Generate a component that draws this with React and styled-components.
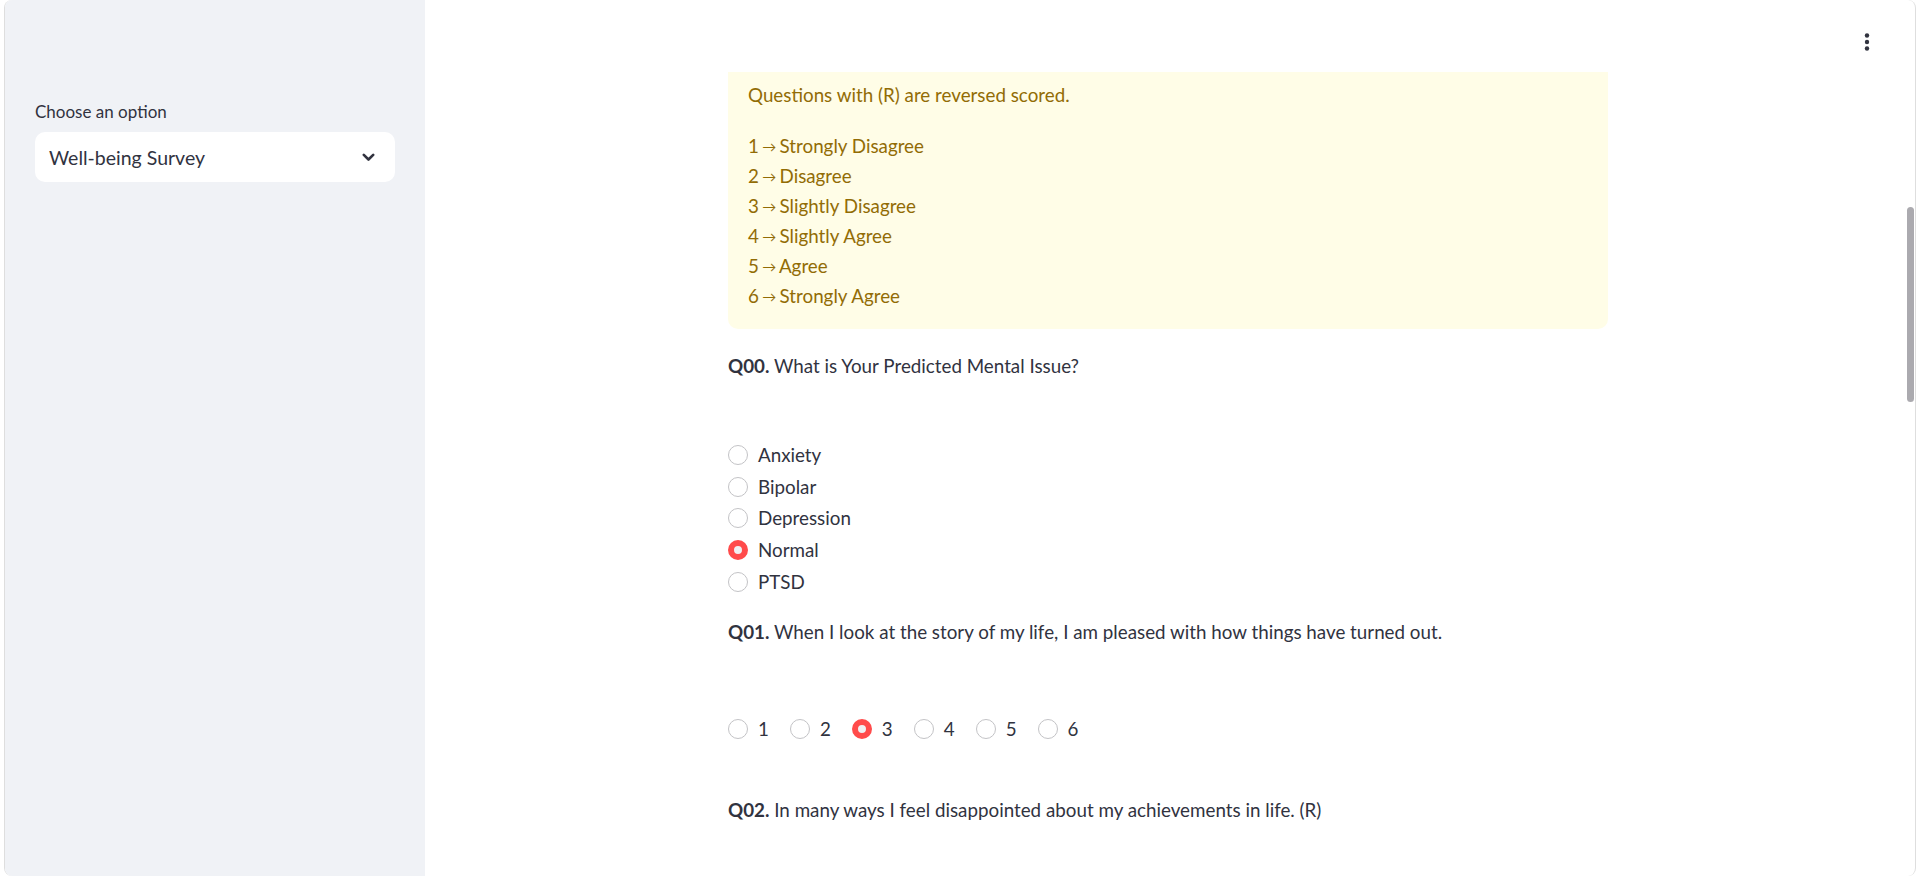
import React from 'react';
import styled, { createGlobalStyle } from 'styled-components';

const GlobalStyle = createGlobalStyle`
  html, body {
    margin: 0;
    padding: 0;
    background: #ffffff;
    overflow: hidden;
  }
  body {
    font-family: Lato, "Open Sans", sans-serif;
    color: #31333f;
  }
  * { box-sizing: border-box; }
`;

const Frame = styled.div`
  position: relative;
  display: flex;
  height: 876px;
  margin: 0 2px 0 4px;
  border-left: 1px solid #dedede;
  border-right: 1px solid #dedede;
  border-radius: 8px;
  overflow: hidden;
`;

const Sidebar = styled.aside`
  width: 420px;
  flex-shrink: 0;
  background: #f0f2f6;
  padding: 101px 30px 0 30px;
`;

const FieldLabel = styled.div`
  font-size: 17px;
  line-height: 22px;
  color: #31333f;
  margin-bottom: 9px;
`;

const Select = styled.div`
  height: 50px;
  background: #ffffff;
  border-radius: 10px;
  display: flex;
  align-items: center;
  justify-content: space-between;
  padding: 0 20px 0 14px;
  font-size: 19.5px;
  color: #31333f;
`;

const Main = styled.main`
  flex: 1;
  display: flex;
  flex-direction: column;
  padding-right: 4px;
`;

const Header = styled.header`
  height: 72px;
  flex-shrink: 0;
  display: flex;
  justify-content: flex-end;
  padding: 32px 40px 0 0;
`;

const MenuButton = styled.div`
  width: 8px;
  height: 20px;
`;

const Content = styled.div`
  width: 880px;
  margin: 0 auto;
  font-size: 18.8px;
  line-height: 30px;
`;

const Alert = styled.div`
  background: #fffde7;
  color: #926c05;
  border-radius: 0 0 10px 10px;
  padding: 8px 20px 18px 20px;
`;

const AlertLead = styled.p`
  margin: 0 0 21px 0;
`;

const AlertLine = styled.div`
  height: 30px;
`;

const Arrow = styled.span`
  font-size: 14px;
  margin: 0 -1.5px;
  vertical-align: 1px;
`;

const Question = styled.div`
  margin-top: ${({ $top }) => $top}px;
  color: #31333f;
  b { font-weight: 700; }
`;

const Options = styled.div`
  display: flex;
  flex-direction: ${({ $horizontal }) => ($horizontal ? 'row' : 'column')};
  gap: ${({ $horizontal }) => ($horizontal ? '21px' : '0')};
  margin-top: ${({ $top }) => $top}px;
`;

const Option = styled.label`
  display: flex;
  align-items: center;
  gap: 10px;
  height: 31.7px;
  color: #31333f;
`;

const Dot = styled.span`
  width: 20px;
  height: 20px;
  border-radius: 50%;
  flex-shrink: 0;
  border: ${({ $on }) => ($on ? '6.5px solid #ff4b4b' : '1px solid #c3c3c6')};
  background: ${({ $on }) => ($on ? '#f0f0f2' : '#ffffff')};
`;

const ScrollThumb = styled.div`
  position: absolute;
  right: 1px;
  top: 207px;
  width: 7px;
  height: 195px;
  border-radius: 4px;
  background: #abaaaf;
`;

const issues = ['Anxiety', 'Bipolar', 'Depression', 'Normal', 'PTSD'];
const scale = [
  'Strongly Disagree',
  'Disagree',
  'Slightly Disagree',
  'Slightly Agree',
  'Agree',
  'Strongly Agree',
];

function Radio({ label, on }) {
  return (
    <Option>
      <Dot $on={on} />
      {label}
    </Option>
  );
}

export default function App() {
  return (
    <>
      <GlobalStyle />
      <Frame>
        <Sidebar>
          <FieldLabel>Choose an option</FieldLabel>
          <Select>
            Well-being Survey
            <svg width="13" height="9" viewBox="0 0 13 9">
              <path d="M1.8 1.8 L6.5 6.5 L11.2 1.8" fill="none" stroke="#31333f" strokeWidth="2.6" strokeLinecap="round" strokeLinejoin="round" />
            </svg>
          </Select>
        </Sidebar>
        <Main>
          <Header>
            <MenuButton>
              <svg width="8" height="20" viewBox="0 0 8 20">
                <circle cx="4" cy="3.5" r="2.2" fill="#31333f" />
                <circle cx="4" cy="10" r="2.2" fill="#31333f" />
                <circle cx="4" cy="16.5" r="2.2" fill="#31333f" />
              </svg>
            </MenuButton>
          </Header>
          <Content>
            <Alert>
              <AlertLead>Questions with (R) are reversed scored.</AlertLead>
              {scale.map((s, i) => (
                <AlertLine key={s}>
                  {i + 1} <Arrow>→</Arrow> {s}
                </AlertLine>
              ))}
            </Alert>
            <Question $top={22}>
              <b>Q00.</b> What is Your Predicted Mental Issue?
            </Question>
            <Options $top={58}>
              {issues.map((s) => (
                <Radio key={s} label={s} on={s === 'Normal'} />
              ))}
            </Options>
            <Question $top={20}>
              <b>Q01.</b> When I look at the story of my life, I am pleased with how things have turned out.
            </Question>
            <Options $horizontal $top={66}>
              {[1, 2, 3, 4, 5, 6].map((n) => (
                <Radio key={n} label={String(n)} on={n === 3} />
              ))}
            </Options>
            <Question $top={50}>
              <b>Q02.</b> In many ways I feel disappointed about my achievements in life. (R)
            </Question>
          </Content>
        </Main>
        <ScrollThumb />
      </Frame>
    </>
  );
}
